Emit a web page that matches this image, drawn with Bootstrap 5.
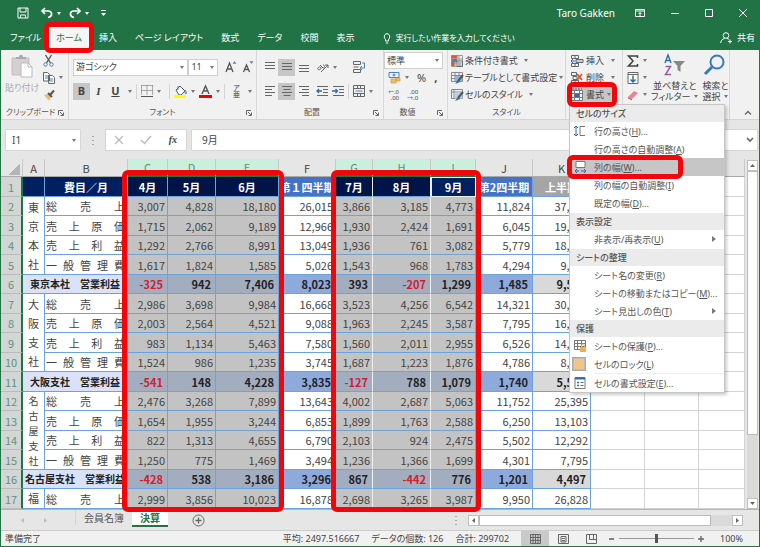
<!DOCTYPE html>
<html lang="ja">
<head>
<meta charset="utf-8">
<meta name="viewport" content="width=device-width, initial-scale=1">
<title>決算 - Excel</title>
<link href="https://cdn.jsdelivr.net/npm/bootstrap@5.3.0/dist/css/bootstrap.min.css" rel="stylesheet">
<style>
:root{--xl:#217346;--mark-red:#f40509;--line:#6ba3dc}
body{font-family:"Noto Sans","Noto Sans CJK JP",sans-serif;font-size:9px;line-height:12px;color:#444;background:#e6e6e6}
.jp{font-feature-settings:"palt"}
button,input,select{font:inherit;color:inherit;font-feature-settings:inherit}
button{border:0;background:none;padding:0;display:inline-flex;align-items:center;white-space:nowrap}
svg{display:block;flex:none;fill:none;stroke:#666;overflow:visible}
.i12{width:12px;height:12px}
.app{border:1px solid var(--xl);border-top:0;border-bottom-width:2px}
.caret{width:0;height:0;flex:none;border:2px solid transparent;border-top:3px solid #777;border-bottom:0}
.callout{position:absolute;border:5px solid var(--mark-red);border-radius:6px;pointer-events:none;z-index:30}

.titlebar{background:var(--xl);color:#fff;height:26px;font-size:10px;padding:0 12px 0 16px}
.titlebar svg,.tabbar svg{stroke:#fff}
.titlebar .caret{border-top-color:#fff}
.wincontrols{gap:26px}
.tabbar{background:var(--xl);height:24px;color:#fff}
.tabbar .nav-link{color:#fff;padding:0 9px;line-height:24px;font-size:9px}
.tabbar .nav-link.active{background:#f5f5f5;color:var(--xl);padding:0 8px}
.tabbar .file-link{padding:0 7px 0 9px}
.tell-me{font-size:8px;margin-left:20px}
.home-callout{inset:-4px -4px -3px -4px}

.ribbon{background:#f1f1f1;height:70px;border-bottom:1px solid #d4d4d4}
.rgroup{border-right:1px solid #d8d8d8;flex:none;display:flex;flex-direction:column}
.rbody{height:56px}
.rlabel{text-align:center;position:relative;color:#555;font-size:8px;line-height:14px}
.launcher{position:absolute;right:4px;top:5px;width:6px;height:6px}
.launcher svg{width:6px;height:6px}
.stack3{display:flex;flex-direction:column;padding-top:2px}
.stack3>*{height:17px;display:flex;align-items:center}
.line2{height:18px;display:flex;align-items:center}
.tool{width:17px;height:17px;justify-content:center;flex:none}
.tool.on{background:#c6c6c6}
.glyph{font-size:11px}
.ruby{font-size:7px;line-height:7px}
.decimals{font-size:6px;line-height:6px}
.two-line{line-height:11px}
.dimmed{color:#aaa}
.serif{font-family:"Liberation Serif",serif}
.vr1{width:1px;height:15px;background:#d4d4d4;flex:none}
.pick{appearance:none;border:1px solid #cfcfcf;border-radius:0;background:#fff url("data:image/svg+xml,%3Csvg xmlns='http://www.w3.org/2000/svg' viewBox='0 0 4 3'%3E%3Cpath d='M0 0h4L2 3z' fill='%23777'/%3E%3C/svg%3E") no-repeat right 3px center/4px 3px;height:17px;padding:0 0 0 2px;line-height:14px}
.g-clip{width:68px}.g-font{width:188px}.g-align{width:127px}.g-num{width:64px}.g-style{width:118px}.g-cells{width:57px}.g-edit{width:107px}
.w-font{width:117px}.w-size{width:30px}.w-num{width:59px}
.cells-body{padding-left:5px}
.style-body{padding-left:3px}
.style-body button{gap:2px}
.cell-btn{width:43px;gap:3px;height:17px}
.cell-btn.on{background:#c6c6c6}
.format-callout{inset:-4px auto -4px -4px;width:50px}

.menu-panel{position:absolute;left:-2px;top:18px;width:156px;z-index:20;background:#fff;border:1px solid #c6c6c6;box-shadow:2px 2px 3px #0003;color:#555;line-height:17px}
.menu-panel section:nth-child(-n+2){padding-bottom:1px}
.menu-panel h6{font-size:9px;font-weight:500;line-height:17px;margin:0;padding-left:6px;background:#ebebeb;color:#555}
.mi{display:flex;width:100%;height:18px;padding-right:8px;position:relative;text-align:left}
.mi .slot{width:24px;padding-left:4px;flex:none}
.mi.on{background:#c6c6c6}
.mi .sub{margin-left:auto;width:0;height:0;border:3px solid transparent;border-left:4px solid #777;border-right:0}
.mi.latched .slot{padding:2px 0 2px 2px}
.latch{width:14px;height:14px;background:#f1c48a;border:2px solid #bbb;outline:1px solid #aaa;outline-offset:-1px}
.menu-panel hr{margin:0 0 0 24px;border-color:#bbb}
.width-callout{inset:-3px 41px -3px -3px}

.fbar{height:39px;padding:9px 1px 8px 4px;font-size:10px}
.fbox{background:#fff;border:1px solid #d6d6d6;height:22px}
.fbox input{border:0;background:transparent;outline:0;min-width:0;width:100%}
.w-name{width:76px}.w-fx{width:82px}

.sheet{flex:1;min-width:0;position:relative}
.grid{table-layout:fixed;width:100%;border-collapse:separate;border-spacing:0;font-family:"Noto Sans CJK JP",sans-serif;font-feature-settings:normal;font-size:11px;line-height:18px;color:#444;background:#fff}
.grid th,.grid td{padding:0 2px 0 1px;white-space:nowrap;overflow:hidden;border-right:1px solid var(--line);border-bottom:1px solid var(--line);text-align:right}
.grid thead th{height:18px;background:#e6e6e6;font-weight:400;text-align:center;border-color:#c8c8c8;border-bottom:1px solid #aaa;color:#444;line-height:16px;padding:0}
.grid thead th.hot{background:#caefdc;color:#628d77;border-bottom:2px solid var(--xl)}
.grid tbody tr{height:19px}
.grid tbody tr:nth-child(odd){height:20px}
.grid tbody th.rn{background:#d2d6d4;color:#68907d;font-weight:400;text-align:center;border-right:2px solid var(--xl);border-bottom-color:#b8bcba;padding:0}
.grid td.idle{border-color:#d0d3d8}
.grid td.sel{background:#c3c3c3}
.grid td.cG,.grid td.cH{border-right-color:#eee}
.grid .spread{text-align:justify;text-align-last:justify}
.grid td.dept{text-align:center;padding:0;white-space:normal}
.dept span{display:block;line-height:19px}
.dept.five span{line-height:15px;font-size:10px}
.grid .sum td{font-weight:700;color:#222;padding-right:4px}
.grid .sum td.who{background:#d9e2f8;text-align:center;font-size:10px;padding:0}
.grid .sum td.sel{background:#a2adbf}
.grid .sum td.quarter{background:#8ea9db}
.grid .sum td.half{background:#d9d9d9}
.grid .sum td.idle{background:#fff}
.grid .sum td.neg{color:#d02030}
.grid .top td{background:#002060;color:#fff;font-weight:700;text-align:center;padding:0}
.grid .top td.sel{background:#00144a}
.grid .top td.now{background:#002060;border:1px solid #e8f4ee}
.grid .top td.quarter{background:#4472c4}
.grid .top td.half{background:#a5a5a5}
.grid .top td.idle{background:#fff}
.corner{width:12px;height:12px;margin:3px 0 0 7px;background:linear-gradient(135deg,transparent 50%,#b4b4b4 50%)}
.box-q1{left:121px;top:11px;width:162px;bottom:-3px}
.box-q2{left:330px;top:11px;width:150px;bottom:-3px}

.vscroll{width:14px;padding:1px 1px 0 2px;display:flex;flex-direction:column}
.sbtn{width:11px;height:11px;background:#fff;border:1px solid #c0c0c0;justify-content:center;flex:none}
.vthumb{height:264px;background:#fff;border:1px solid #bbb}
.vtrack{background:#dadada;flex:1}
.tabs-row{height:21px;border-top:1px solid #b5b5b5;font-size:10px}
.tabs-row .stab{line-height:16px;height:17px;padding:0 8px;color:#555;text-decoration:none}
.tabs-row .stab.active{background:#fff;color:var(--xl);font-weight:700;border-bottom:2px solid var(--xl)}
.hscroll{width:275px;height:11px}
.hthumb{flex:1;height:11px;background:#fff;border:1px solid #bbb}
.htrack{width:21px;height:11px;background:#dadada}
.status{height:16px;border-top:1px solid #ccc;background:#f1f1f1;font-size:9px}
.view{width:28px;height:15px;justify-content:center}
.view.on{background:#c9c9c9}
.zoomer{appearance:none;width:75px;height:11px;background:linear-gradient(#999,#999) center/100% 1px no-repeat}
.zoomer::-webkit-slider-thumb{appearance:none;width:3px;height:9px;background:#555}
</style>
<script src="https://cdn.jsdelivr.net/npm/bootstrap@5.3.0/dist/js/bootstrap.bundle.min.js" defer></script>
</head>
<body class="jp">
<div class="app min-vh-100 d-flex flex-column">

<header class="titlebar d-flex align-items-center">
  <button aria-label="上書き保存"><svg class="i12" viewBox="0 0 12 12"><path d="M1 1h10v10H1zM3 1v4h6V1M3.500 11V8h5v3"/></svg></button>
  <button class="ms-2 ps-1" aria-label="元に戻す"><svg class="i12" viewBox="0 0 12 12" stroke-width="1.700"><path d="M4 1 1 4l3 3M1.500 4H7c5 0 4.500 6 0 6.500"/></svg></button><span class="caret ms-1"></span>
  <button class="ms-2" aria-label="やり直し"><svg class="i12" viewBox="0 0 12 12" stroke-width="1.700"><path d="m8 1 3 3-3 3M10.500 4H5C0 4 .5 10 5 10.500"/></svg></button><span class="caret ms-1"></span>
  <button class="ms-2 ps-1" aria-label="クイック アクセスのカスタマイズ"><svg width="5" height="7" viewBox="0 0 5 7"><path d="M0 .5h5"/><path d="M0 3h5L2.500 6z" fill="#fff" stroke="none"/></svg></button>
  <span class="ms-auto pe-3">Taro Gakken</span>
  <div class="wincontrols d-flex align-items-center ps-1">
    <button aria-label="リボンの表示オプション"><svg width="10" height="8" viewBox="0 0 10 8"><path d="M.5.5h9v7h-9zM.5 2h9M5 7V3.500M3.500 5 5 3.500 6.500 5"/></svg></button>
    <button aria-label="最小化"><svg width="8" height="8" viewBox="0 0 8 8"><path d="M0 4.500h8"/></svg></button>
    <button aria-label="最大化"><svg width="8" height="8" viewBox="0 0 8 8"><path d="M.5.5h7v7h-7z"/></svg></button>
    <button aria-label="閉じる"><svg width="8" height="8" viewBox="0 0 8 8"><path d="m0 0 8 8M8 0 0 8"/></svg></button>
  </div>
</header>

<nav class="tabbar d-flex">
  <a class="nav-link file-link" href="#">ファイル</a>
  <div class="position-relative"><a class="nav-link active" href="#">ホーム</a><span class="callout home-callout"></span></div>
  <a class="nav-link" href="#">挿入</a>
  <a class="nav-link" href="#">ページ レイアウト</a>
  <a class="nav-link" href="#">数式</a>
  <a class="nav-link" href="#">データ</a>
  <a class="nav-link" href="#">校閲</a>
  <a class="nav-link" href="#">表示</a>
  <button class="tell-me gap-1"><svg width="8" height="11" viewBox="0 0 8 11"><path d="M2.500 8V6.500C.7 5.300.8.700 4 .7s3.300 4.600 1.500 5.800V8zM2.700 10h2.600"/></svg>実行したい作業を入力してください</button>
  <button class="ms-auto me-1 gap-1"><svg width="13" height="12" viewBox="0 0 13 12"><circle cx="6" cy="3.500" r="2.800"/><path d="M.7 11c.3-3 2-4.200 4-4.500M7 6.500c1 .1 1.700.5 2 1M10 7.500v4M8 9.500h4"/></svg>共有</button>
</nav>

<div class="ribbon d-flex position-relative">
  <div class="rgroup g-clip">
    <div class="rbody d-flex">
      <button class="flex-column ms-1 pt-1 dimmed"><svg width="22" height="24" viewBox="0 0 22 24"><path d="M1 4h17v17H1z" fill="#d5cfd0" stroke="#c4bec0"/><path d="M5 5V3h3c0-3 4-3 4 0h3v2z" fill="#aaa" stroke="none"/><path d="M10 9h7l4 4v10H10z" fill="#fff" stroke="#bbb8c4"/><path d="M17 9v4h4" stroke="#bbb8c4"/></svg><span class="mt-1">貼り付け</span></button>
      <div class="stack3 ms-1">
        <button aria-label="切り取り"><svg class="i12" viewBox="0 0 12 12"><path d="m2.500 0 5 8M8.500 0l-5 8" stroke="#555" stroke-width="1.400"/><circle cx="2.500" cy="9.500" r="1.700" stroke="#4b82bd"/><circle cx="8.500" cy="9.500" r="1.700" stroke="#4b82bd"/></svg></button>
        <button aria-label="コピー"><svg class="i12" viewBox="0 0 12 12"><path d="M.5.5h4l2 2V9h-6zM5.500 3.500h4l2 2v6h-6z" fill="#fff"/><path d="M2 4h3M2 6h3M7 7h3M7 9h3" stroke="#4b82bd"/></svg><span class="caret ms-1"></span></button>
        <button aria-label="書式のコピー/貼り付け"><svg class="i12" viewBox="0 0 12 12"><path d="m1 6 4-1 3 3-2 4z" fill="#efbd6d" stroke="none"/><path d="m5 4 4 4M7.500 5.500 11 1.500" stroke="#555" stroke-width="2"/></svg></button>
      </div>
    </div>
    <div class="rlabel pe-2">クリップボード<button class="launcher" aria-label="クリップボードの詳細"><svg viewBox="0 0 6 6"><path d="M.5 5V.5H5M2 2l3 3M5.500 2.500v3h-3"/></svg></button></div>
  </div>

  <div class="rgroup g-font">
    <div class="rbody ps-1">
      <div class="line2 mt-2"><select class="pick w-font" aria-label="フォント"><option>游ゴシック</option></select><select class="pick w-size" aria-label="フォント サイズ"><option>11</option></select>
        <button class="tool ms-1" aria-label="フォント サイズの拡大"><svg class="i12" viewBox="0 0 12 12"><path d="m1 11 3.500-9L8 11M2.300 8h4.400" stroke="#555" stroke-width="1.300"/><path d="m8 2.500 1.500-2 1.500 2z" fill="#4b82bd" stroke="#4b82bd" stroke-width=".5"/></svg></button>
        <button class="tool" aria-label="フォント サイズの縮小"><svg class="i12" viewBox="0 0 12 12"><path d="m1.500 11 3-7 3 7M2.800 8.500h3.400" stroke="#555" stroke-width="1.300"/><path d="m8 .5 1.500 2L11 .5z" fill="#4b82bd" stroke="#4b82bd" stroke-width=".5"/></svg></button></div>
      <div class="line2 mt-1 pt-1">
        <button class="tool on fw-bold glyph">B</button><button class="tool fst-italic fw-bold glyph serif">I</button><button class="tool fw-bold text-decoration-underline glyph">U</button><span class="caret ms-1"></span><span class="vr1 ms-1 me-1"></span>
        <button aria-label="罫線"><svg class="i12" viewBox="0 0 12 12" stroke="#888"><path d="M.5.500h11M.5 5.500h11M.5.500v10M6 .500v10M11.500.500v10" stroke-dasharray="1 1"/><path d="M0 11.500h12" stroke="#555"/></svg></button><span class="caret ms-1"></span><span class="vr1 ms-2 me-1"></span>
        <button aria-label="塗りつぶしの色"><svg width="13" height="13" viewBox="0 0 13 13"><path d="m2 5 4-4 5 5-4 4H5z" fill="#fff" stroke="#555"/><path d="M4 1v4M11 5c2 2 1.500 4 1 4s-1.500-1-1-4" stroke="#4b82bd"/><path d="M0 11.500h12" stroke="#ff0" stroke-width="3"/></svg></button><span class="caret ms-1"></span>
        <button class="ms-1" aria-label="フォントの色"><svg width="13" height="13" viewBox="0 0 13 13"><path d="m3 9 3.500-8L10 9M4 6h5" stroke="#555" stroke-width="1.400"/><path d="M0 11.500h13" stroke="#e00" stroke-width="3"/></svg></button><span class="caret ms-1"></span><span class="vr1 ms-1 me-1"></span>
        <button class="flex-column ms-1 ruby"><span>ア</span><span>亜</span></button><span class="caret ms-2"></span>
      </div>
    </div>
    <div class="rlabel">フォント<button class="launcher" aria-label="フォントの詳細"><svg viewBox="0 0 6 6"><path d="M.5 5V.5H5M2 2l3 3M5.500 2.500v3h-3"/></svg></button></div>
  </div>

  <div class="rgroup g-align">
    <div class="rbody ps-1">
      <div class="line2 mt-2">
        <button class="tool" aria-label="上揃え"><svg class="i12" viewBox="0 0 12 12"><path d="M1 1.500h10M1 4.500h10M1 7.500h10"/></svg></button><button class="tool on" aria-label="上下中央揃え"><svg class="i12" viewBox="0 0 12 12"><path d="M1 2.500h10M1 5.500h10M1 8.500h10"/></svg></button><button class="tool" aria-label="下揃え"><svg class="i12" viewBox="0 0 12 12"><path d="M1 4.500h10M1 7.500h10M1 10.500h10"/></svg></button>
        <button class="ms-1" aria-label="方向"><svg width="13" height="12" viewBox="0 0 13 12"><path d="M2.500 6.500c2-2 3.500 1 1.500 2s-3-1-1.500-2M4 4l3 3c2 0 2-3 0-3M5 11l7-7M12 7V4H9"/></svg></button><span class="caret ms-1"></span>
        <button class="ms-3" aria-label="折り返して全体を表示する"><svg class="i12" viewBox="0 0 12 12"><path d="M.5.5h7v3h-7zM.5 6h5M.5 8.500h7v3h-7z"/><path d="M9 2h2.500v5H7M9 5 7 7l2 2" stroke="#4b82bd"/></svg></button>
      </div>
      <div class="line2 mt-1 pt-1">
        <button class="tool" aria-label="左揃え"><svg class="i12" viewBox="0 0 12 12"><path d="M1 1.500h10M1 4.500h7M1 7.500h10M1 10.500h7"/></svg></button><button class="tool on" aria-label="中央揃え"><svg class="i12" viewBox="0 0 12 12"><path d="M1 1.500h10M2.500 4.500h7M1 7.500h10M2.500 10.500h7"/></svg></button><button class="tool" aria-label="右揃え"><svg class="i12" viewBox="0 0 12 12"><path d="M1 1.500h10M4 4.500h7M1 7.500h10M4 10.500h7"/></svg></button>
        <button class="ms-1" aria-label="インデントを減らす"><svg class="i12" viewBox="0 0 12 12"><path d="M1 1.500h11M7 4.500h5M7 7.500h5M1 10.500h11"/><path d="M6 6H1M3 4 1 6l2 2" stroke="#2b6cb0" stroke-width="1.300"/></svg></button>
        <button class="ms-1" aria-label="インデントを増やす"><svg class="i12" viewBox="0 0 12 12"><path d="M1 1.500h11M7 4.500h5M7 7.500h5M1 10.500h11"/><path d="M0 6h5M3.500 4l2 2-2 2" stroke="#2b6cb0" stroke-width="1.300"/></svg></button><span class="vr1 mx-1"></span>
        <button aria-label="セルを結合して中央揃え"><svg class="i12" viewBox="0 0 12 12"><path d="M.5.5h11v11H.5zM.5 3.500h11M.5 8.500h11M4.500.500v3M7.500.5v3M4.500 8.500v3M7.500 8.500v3"/><path d="M2.500 6h7" stroke="#4b82bd"/></svg></button><span class="caret ms-1"></span>
      </div>
    </div>
    <div class="rlabel pe-3">配置<button class="launcher" aria-label="配置の詳細"><svg viewBox="0 0 6 6"><path d="M.5 5V.5H5M2 2l3 3M5.500 2.500v3h-3"/></svg></button></div>
  </div>

  <div class="rgroup g-num">
    <div class="rbody stack3">
      <div><select class="pick w-num" aria-label="数値の書式"><option>標準</option></select></div>
      <div class="ps-1"><button aria-label="通貨表示形式"><svg width="13" height="12" viewBox="0 0 13 12"><path d="M1 .5h10v5H1z" fill="#e8f1fa" stroke="#4b82bd"/><circle cx="6" cy="3" r="1" stroke="#4b82bd"/><path d="M3 7h5v4H3zM8 6h4v3H8z" fill="#efbd6d" stroke="#d99a3b" stroke-width=".7"/></svg></button><span class="caret ms-1"></span><button class="ms-2 glyph">%</button><button class="ms-2 fw-bold glyph">,</button></div>
      <div class="ps-1"><button class="flex-column align-items-end decimals"><span><span class="text-primary">←</span>.0</span><span>.00</span></button><button class="ms-2 flex-column align-items-end decimals"><span>.00</span><span><span class="text-primary">→</span>.0</span></button></div>
    </div>
    <div class="rlabel pe-3">数値<button class="launcher" aria-label="数値の詳細"><svg viewBox="0 0 6 6"><path d="M.5 5V.5H5M2 2l3 3M5.500 2.500v3h-3"/></svg></button></div>
  </div>

  <div class="rgroup g-style">
    <div class="rbody stack3 style-body">
      <button><svg class="i12" viewBox="0 0 12 12"><path d="M.5.5h11v11H.5zM4 .5v11M8 .5v11M.5 4h11M.5 8h11" stroke="#999"/><path d="M.5.500h6v3h-6zM.5 7h3v4h-3z" fill="#d65a3e" stroke="none"/><path d="M1 4h5v3H1z" fill="#4b82bd" stroke="none"/><path d="M6 6h5.500v5.500H6z" fill="#fff"/><path d="M7 8h3.500M7 10h3.500"/></svg>条件付き書式<span class="caret ms-1"></span></button>
      <button><svg class="i12" viewBox="0 0 12 12"><path d="M.5.5h11v9H.5zM4 .5v9M8 .5v9M.5 3.500h11M.5 6.500h11" stroke="#888"/><path d="M4 4h7v5H4z" fill="#8fb6df" stroke="none"/><path d="m12 3-5 6" stroke="#555" stroke-width="2"/><path d="m7 8-3 4 5-2z" fill="#2b6cb0" stroke="none"/></svg>テーブルとして書式設定<span class="caret"></span></button>
      <button><svg class="i12" viewBox="0 0 12 12"><path d="M.5.5h11v9H.5zM.5 3h11M3 .5v9" stroke="#888"/><path d="M3.500 3.500h8v6h-8z" fill="#b8d0ea" stroke="none"/><path d="m12 3-5 6" stroke="#555" stroke-width="2"/><path d="m7 8-3 4 5-2z" fill="#2b6cb0" stroke="none"/></svg>セルのスタイル<span class="caret ms-1"></span></button>
    </div>
    <div class="rlabel">スタイル</div>
  </div>

  <div class="rgroup g-cells">
    <div class="rbody stack3 cells-body">
      <button class="cell-btn"><svg class="i12" viewBox="0 0 12 12"><path d="M.5.5h7v3h-7zM4 .5v3M.5 8.500h7v3h-7zM4 8.500v3"/><path d="M5 4.500h7v3H5z" fill="#bcd3ea"/><path d="M4 6H0M2 4 0 6l2 2" stroke="#2b6cb0"/></svg>挿入<span class="caret ms-1"></span></button>
      <button class="cell-btn"><svg class="i12" viewBox="0 0 12 12"><path d="M.5.5h5v3h-5zM.5 8.500h7v3h-7zM4 8.500v3M2 4.500h4v3H2z"/><path d="m6 2 5 6m0-6L6 8" stroke="#d9502e" stroke-width="1.600"/></svg>削除<span class="caret ms-1"></span></button>
      <div class="position-relative">
        <button class="cell-btn on" aria-expanded="true"><svg class="i12" viewBox="0 0 12 12"><path d="M.5 1.500h11v10H.5zM.5 4.500h11M.5 8.500h11M3.500 1.500v10M8.500 1.500v10" fill="#fff" stroke="#777"/><path d="M4 5h4v3H4z" fill="#2b6cb0" stroke="none"/><path d="M1 0h10" stroke="#2b6cb0" stroke-dasharray="2 1"/></svg>書式<span class="caret"></span></button>
        <span class="callout format-callout"></span>
        <div class="menu-panel">
          <section><h6>セルのサイズ</h6>
            <button class="mi"><span class="slot"><svg class="i12" viewBox="0 0 12 12"><path d="M11 1.500H6v9h5" stroke="#777"/><path d="M2 1v10M0 3l2-2 2 2M0 9l2 2 2-2" stroke="#2b6cb0"/></svg></span>行の高さ(<u>H</u>)...</button>
            <button class="mi"><span class="slot"></span>行の高さの自動調整(<u>A</u>)</button>
            <button class="mi on"><span class="slot"><svg class="i12" viewBox="0 0 12 12"><path d="M2 .5h9v6H2z" fill="#fff" stroke="#777"/><path d="M1 10h4M7 10h5M3 8l-2 2 2 2M10 8l2 2-2 2" stroke="#2b6cb0"/></svg></span>列の幅(<u>W</u>)...<span class="callout width-callout"></span></button>
            <button class="mi"><span class="slot"></span>列の幅の自動調整(<u>I</u>)</button>
            <button class="mi"><span class="slot"></span>既定の幅(<u>D</u>)...</button>
          </section>
          <section><h6>表示設定</h6>
            <button class="mi"><span class="slot"></span>非表示/再表示(<u>U</u>)<span class="sub"></span></button>
          </section>
          <section><h6>シートの整理</h6>
            <button class="mi"><span class="slot"></span>シート名の変更(<u>R</u>)</button>
            <button class="mi"><span class="slot"></span>シートの移動またはコピー(<u>M</u>)...</button>
            <button class="mi"><span class="slot"></span>シート見出しの色(<u>T</u>)<span class="sub"></span></button>
          </section>
          <section><h6>保護</h6>
            <button class="mi"><span class="slot"><svg class="i12" viewBox="0 0 12 12"><path d="M.5.5h11v9H.5zM.5 3.500h11M.5 6.500h11M3.500.5v9M7.500.5v9" stroke="#777"/><path d="M6 7h6v5H6z" fill="#efae55" stroke="none"/><path d="M7.500 7V5.500c0-2 3-2 3 0V7" stroke="#efae55"/></svg></span>シートの保護(<u>P</u>)...</button>
            <button class="mi latched"><span class="slot"><span class="latch d-block"></span></span>セルのロック(<u>L</u>)</button>
            <hr>
            <button class="mi"><span class="slot"><svg class="i12" viewBox="0 0 12 12"><path d="M1 .5h10v11H1z" fill="#fff" stroke="#777"/><path d="M1 1.500h10" stroke="#2b6cb0" stroke-width="2"/><path d="M3 5.500h2M3 8.500h2" stroke="#2b6cb0" stroke-width="1.500"/><path d="M6.500 5.500h3M6.500 8.500h3"/></svg></span>セルの書式設定(<u>E</u>)...</button>
          </section>
        </div>
      </div>
    </div>
  </div>

  <div class="rgroup g-edit">
    <div class="rbody d-flex">
      <div class="stack3 ps-1">
        <button aria-label="オート SUM"><svg class="i12" viewBox="0 0 12 12"><path d="M10.500 3V1H1.500l4.500 5-4.500 5h9V9" stroke="#444" stroke-width="1.600"/></svg><span class="caret ms-1"></span></button>
        <button aria-label="フィル"><svg class="i12" viewBox="0 0 12 12"><path d="M1 .5h10v11H1zM1 2.500h10" fill="#fff"/><path d="M6 3.500V10M3.500 7.500 6 10l2.500-2.500" stroke="#2b6cb0" stroke-width="1.500"/></svg><span class="caret ms-1"></span></button>
        <button aria-label="クリア"><svg class="i12" viewBox="0 0 12 12"><path d="m1 8 6-6 4 2-6 6z" fill="#e68593" stroke="none"/><path d="m1 8 4 2v1.500L1 9.500z" fill="#bd6876" stroke="none"/></svg><span class="caret ms-1"></span></button>
      </div>
      <button class="flex-column ms-1 pt-1 two-line"><svg width="22" height="22" viewBox="0 0 22 22" class="mb-1"><path d="m1 9 3-8 3 8M2 6.500h4" stroke="#2b6cb0" stroke-width="1.400"/><path d="M1.500 12.500h5l-5 8h5.500" stroke="#9b59a5" stroke-width="1.500"/><path d="M9 7h12l-4.500 5v6l-3-2v-4z" fill="#888" stroke="none"/></svg><span>並べ替えと</span><span class="d-flex align-items-center">フィルター<span class="caret ms-1"></span></span></button>
      <button class="flex-column ms-1 pt-1 two-line"><svg width="22" height="22" viewBox="0 0 22 22" class="mb-1"><circle cx="13" cy="8" r="6.500" stroke="#3a78b8" stroke-width="2"/><path d="m8 13-7 7" stroke="#3a78b8" stroke-width="3"/></svg><span>検索と</span><span class="d-flex align-items-center">選択<span class="caret ms-1"></span></span></button>
    </div>
  </div>
  <button class="ms-auto align-self-end me-2 mb-1" aria-label="リボンを折りたたむ"><svg width="6" height="4" viewBox="0 0 6 4"><path d="m0 3.500 3-3 3 3" stroke-width="1.300"/></svg></button>
</div>

<div class="fbar d-flex">
  <div class="fbox w-name d-flex align-items-center ps-1 pe-1"><input aria-label="名前ボックス" value="I1"><span class="caret"></span></div>
  <svg class="mx-2 align-self-center" width="8" height="9" viewBox="0 0 8 9"><path d="M4 0v9" stroke="#999" stroke-dasharray="1 3" stroke-width="1.500"/></svg>
  <div class="fbox w-fx d-flex align-items-center justify-content-around">
    <button aria-label="キャンセル"><svg width="8" height="8" viewBox="0 0 8 8"><path d="m0 0 8 8M8 0 0 8" stroke="#bbb" stroke-width="1.300"/></svg></button>
    <button aria-label="入力"><svg width="10" height="8" viewBox="0 0 10 8"><path d="m0 4 3.500 3.500L10 0" stroke="#bbb" stroke-width="1.500"/></svg></button>
    <button class="fst-italic fw-bold serif">fx</button>
  </div>
  <div class="fbox flex-grow-1 d-flex align-items-center ms-1 ps-2 pe-1"><input aria-label="数式バー" value="9月"><svg width="6" height="4" viewBox="0 0 6 4"><path d="m0 0 3 3 3-3" stroke-width="1.600"/></svg></div>
</div>

<main class="d-flex">
  <div class="sheet">
    <table class="grid">
      <colgroup><col width="22"><col width="22"><col width="83"><col width="40"><col width="48"><col width="63"><col width="57"><col width="37"><col width="58"><col width="45"><col width="57"><col width="58"><col width="54"><col width="54"><col></colgroup>
      <thead><tr><th><div class="corner"></div></th><th>A</th><th>B</th><th class="hot">C</th><th class="hot">D</th><th class="hot">E</th><th>F</th><th class="hot">G</th><th class="hot">H</th><th class="hot">I</th><th>J</th><th>K</th><th>L</th><th>M</th><th>N</th></tr></thead>
      <tbody id="cells"></tbody>
    </table>
    <span class="callout box-q1"></span><span class="callout box-q2"></span>
  </div>
  <div class="vscroll">
    <button class="sbtn" aria-label="上へ"><svg width="5" height="3" viewBox="0 0 5 3"><path d="M0 3h5L2.500 0z" fill="#666" stroke="none"/></svg></button>
    <div class="vthumb"></div><div class="vtrack"></div>
    <button class="sbtn" aria-label="下へ"><svg width="5" height="3" viewBox="0 0 5 3"><path d="M0 0h5L2.500 3z" fill="#666" stroke="none"/></svg></button>
  </div>
</main>

<div class="tabs-row d-flex">
  <button class="ps-3 ms-1" aria-label="前のシート"><svg width="3" height="5" viewBox="0 0 3 5"><path d="M3 0v5L0 2.500z" fill="#bbb" stroke="none"/></svg></button>
  <button class="ps-3 ms-1 me-4" aria-label="次のシート"><svg width="3" height="5" viewBox="0 0 3 5"><path d="M0 0v5l3-2.500z" fill="#bbb" stroke="none"/></svg></button>
  <span class="vr1 ms-1"></span>
  <a class="stab" href="#">会員名簿</a><a class="stab active" href="#">決算</a>
  <button class="ms-4" aria-label="新しいシート"><svg width="13" height="13" viewBox="0 0 13 13"><circle cx="6.500" cy="6.500" r="5.500"/><path d="M6.500 3.500v6M3.500 6.500h6" stroke-width="1.300"/></svg></button>
  <svg class="ms-auto me-2 align-self-center" width="8" height="9" viewBox="0 0 8 9"><path d="M4 0v9" stroke="#999" stroke-dasharray="1 3" stroke-width="1.500"/></svg>
  <div class="hscroll d-flex align-self-center me-3">
    <button class="sbtn" aria-label="左へ"><svg width="3" height="5" viewBox="0 0 3 5"><path d="M3 0v5L0 2.500z" fill="#666" stroke="none"/></svg></button>
    <div class="hthumb"></div><div class="htrack"></div>
    <button class="sbtn" aria-label="右へ"><svg width="3" height="5" viewBox="0 0 3 5"><path d="M0 0v5l3-2.500z" fill="#666" stroke="none"/></svg></button>
  </div>
</div>

<footer class="status d-flex align-items-center flex-grow-1 ps-1 pe-3">
  <span>準備完了</span>
  <span class="ms-auto me-2 pe-1">平均: 2497.516667</span><span class="me-2 pe-1">データの個数: 126</span><span class="me-2 pe-1">合計: 299702</span>
  <button class="view on" aria-label="標準"><svg width="11" height="10" viewBox="0 0 11 10"><path d="M.5.5h10v9H.5zM3 .5v9M5.500.5v9M8 .5v9M.5 3.500h10M.5 6.500h10"/></svg></button>
  <button class="view" aria-label="ページ レイアウト"><svg width="11" height="10" viewBox="0 0 11 10"><path d="M.5.5h10v9H.5zM3 2.500h5v5.500H3zM4 4.500h3M4 6.500h3"/></svg></button>
  <button class="view" aria-label="改ページ プレビュー"><svg width="11" height="10" viewBox="0 0 11 10"><path d="M.5.5h10v9H.5zM3.500.5v5h4v-5M7.500 5.500h3"/></svg></button>
  <button class="ms-1" aria-label="縮小"><svg width="6" height="6" viewBox="0 0 6 6"><path d="M0 3h5" stroke-width="1.600"/></svg></button>
  <input class="zoomer mx-1" type="range" aria-label="ズーム">
  <button aria-label="拡大"><svg width="6" height="6" viewBox="0 0 6 6"><path d="M0 3h6M3 0v6" stroke-width="1.400"/></svg></button>
  <span class="ms-3">100%</span>
</footer>
</div>

<script>
const cols = "CDEFGHIJK";
const items = ["総売上", "売上原価", "売上利益", "一般管理費"];
const depts = [
  {name: "東京本社", sum: "東京本社　営業利益"},
  {name: "大阪支社", sum: "大阪支社　営業利益"},
  {name: "名古屋支社", sum: "名古屋支社　営業利益"},
  {name: "福", sum: ""}
];
const figures = [
  [3007,4828,18180,26015,3866,3185,4773,11824,37839],
  [1715,2062,9189,12966,1930,2424,1691,6045,19011],
  [1292,2766,8991,13049,1936,761,3082,5779,18828],
  [1617,1824,1585,5026,1543,968,1783,4294,9320],
  [-325,942,7406,8023,393,-207,1299,1485,9508],
  [2986,3698,9984,16668,3523,4256,6542,14321,30989],
  [2003,2564,4521,9088,1963,2245,3587,7795,16883],
  [983,1134,5463,7580,1560,2011,2955,6526,14106],
  [1524,986,1235,3745,1687,1223,1876,4786,8531],
  [-541,148,4228,3835,-127,788,1079,1740,5575],
  [2476,3268,7899,13643,4002,2687,5063,11752,25395],
  [1654,1955,3244,6853,1899,1763,2588,6250,13103],
  [822,1313,4655,6790,2103,924,2475,5502,12292],
  [1250,775,1469,3494,1236,1366,1699,4301,7795],
  [-428,538,3186,3296,867,-442,776,1201,4497],
  [2999,3856,10023,16878,2698,3265,3987,9950,26828]
];
const kind = c => "CDEGHI".includes(c) ? "sel c" + c : "FJ".includes(c) ? "quarter" : "half";
const idle = '<td class="idle"></td>'.repeat(3);
const heads = ["4月","5月","6月","第１四半期","7月","8月","9月","第2四半期","上半期"];
let html = '<tr class="top"><th class="rn">1</th><td></td><td>費目／月</td>' +
  heads.map((h, i) => `<td class="${kind(cols[i])}${cols[i] === "I" ? " now" : ""}">${h}</td>`).join("") + idle + "</tr>";
figures.forEach((row, r) => {
  const d = depts[Math.floor(r / 5)], k = r % 5, total = k === 4;
  html += `<tr class="${total ? "sum" : ""}"><th class="rn">${r + 2}</th>`;
  if (total) html += `<td class="who" colspan="2">${d.sum}</td>`;
  else {
    if (k === 0) html += `<td class="dept${d.name.length > 4 ? " five" : ""}" rowspan="${d.name.length > 1 ? 4 : 1}">${[...d.name].map(c => `<span>${c}</span>`).join("")}</td>`;
    html += `<td class="spread">${items[k]}</td>`;
  }
  html += row.map((v, i) => `<td class="${kind(cols[i])}${v < 0 ? " neg" : ""}">${v.toLocaleString("en-US")}</td>`).join("") + idle + "</tr>";
});
document.getElementById("cells").innerHTML = html;
</script>
</body>
</html>
